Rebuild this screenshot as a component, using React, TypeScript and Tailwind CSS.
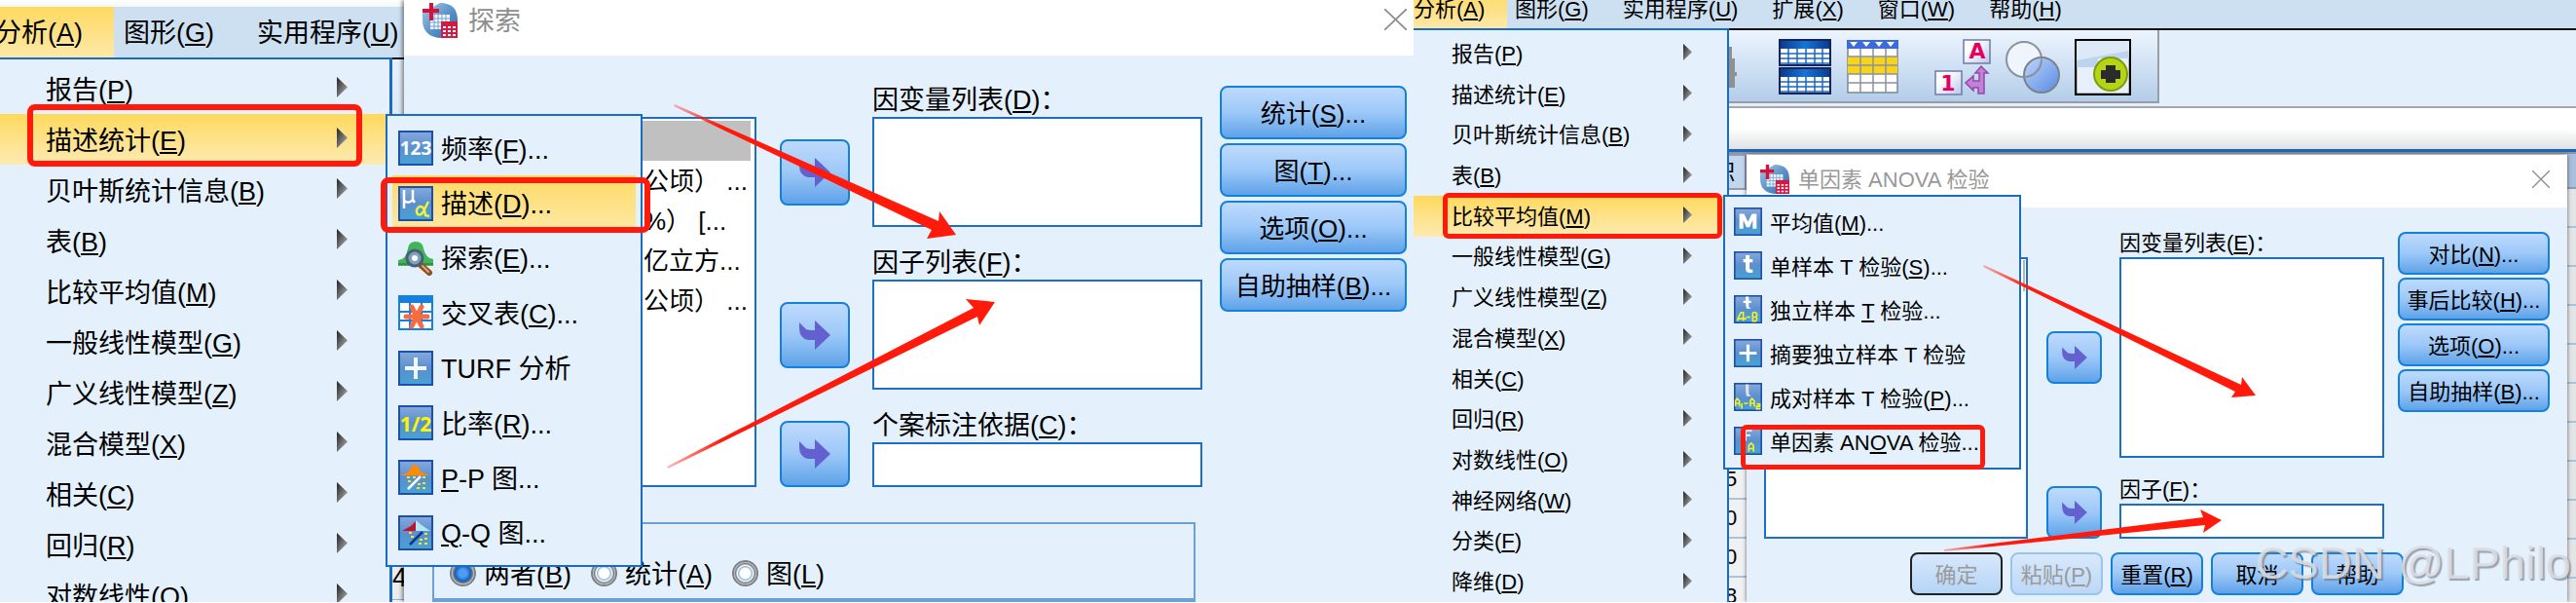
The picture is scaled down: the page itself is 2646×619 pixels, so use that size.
import type { ReactNode } from "react";

type Item = { label: string; hot?: string; tail?: string; active?: boolean };

const leftMenu: Item[] = [
  { label: "报告", hot: "P" },
  { label: "描述统计", hot: "E", active: true },
  { label: "贝叶斯统计信息", hot: "B" },
  { label: "表", hot: "B" },
  { label: "比较平均值", hot: "M" },
  { label: "一般线性模型", hot: "G" },
  { label: "广义线性模型", hot: "Z" },
  { label: "混合模型", hot: "X" },
  { label: "相关", hot: "C" },
  { label: "回归", hot: "R" },
  { label: "对数线性", hot: "O" },
];

const rightMenu: Item[] = [
  { label: "报告", hot: "P" },
  { label: "描述统计", hot: "E" },
  { label: "贝叶斯统计信息", hot: "B" },
  { label: "表", hot: "B" },
  { label: "比较平均值", hot: "M", active: true },
  { label: "一般线性模型", hot: "G" },
  { label: "广义线性模型", hot: "Z" },
  { label: "混合模型", hot: "X" },
  { label: "相关", hot: "C" },
  { label: "回归", hot: "R" },
  { label: "对数线性", hot: "O" },
  { label: "神经网络", hot: "W" },
  { label: "分类", hot: "F" },
  { label: "降维", hot: "D" },
];

const variables = ["", "公顷） ...", "%） [...", "亿立方...", "公顷） ..."];

const U = ({ children }: { children: ReactNode }) => (
  <u className="underline decoration-2 underline-offset-2">{children}</u>
);

const Label = ({ label, hot, tail = "" }: Item) => (
  <span className="whitespace-pre">
    {label}
    {hot && (
      <>
        (<U>{hot}</U>)
      </>
    )}
    {tail}
  </span>
);

/* ---------- icons ---------- */

const Defs = () => (
  <svg className="absolute h-0 w-0" aria-hidden="true">
    <defs>
      <linearGradient id="tile" x1="0" y1="0" x2="0" y2="1">
        <stop offset="0" stopColor="#86a9dc" />
        <stop offset="0.5" stopColor="#5b8fcd" />
        <stop offset="1" stopColor="#46a3d4" />
      </linearGradient>
      <linearGradient id="caret" x1="0" y1="0" x2="1" y2="1">
        <stop offset="0" stopColor="#222" />
        <stop offset="1" stopColor="#bbb" />
      </linearGradient>
      <linearGradient id="globe" x1="0" y1="0" x2="1" y2="1">
        <stop offset="0" stopColor="#a9cbe6" />
        <stop offset="0.5" stopColor="#5d94c8" />
        <stop offset="1" stopColor="#2b6cb0" />
      </linearGradient>
      <linearGradient id="head" x1="0" y1="0" x2="1" y2="0">
        <stop offset="0" stopColor="#0b3b8c" />
        <stop offset="0.5" stopColor="#1674d8" />
        <stop offset="1" stopColor="#0b3b8c" />
      </linearGradient>
      <linearGradient id="venn" x1="0" y1="0" x2="1" y2="1">
        <stop offset="0" stopColor="#bcd2f8" />
        <stop offset="1" stopColor="#4c84e4" />
      </linearGradient>
      <linearGradient id="sheet" x1="0" y1="0" x2="1" y2="1">
        <stop offset="0.3" stopColor="#fff" />
        <stop offset="1" stopColor="#b9c8ea" />
      </linearGradient>
    </defs>
  </svg>
);

const Caret = ({ className }: { className: string }) => (
  <svg viewBox="0 0 12 20" className={className} preserveAspectRatio="none">
    <path d="M0 0L12 10L0 20Z" fill="url(#caret)" />
  </svg>
);

const AppIcon = ({ className }: { className: string }) => (
  <svg viewBox="0 0 36 36" className={className}>
    <path d="M18 0C30 0 36 6 36 18V30L20 36C6 36 0 28 0 18V10Z" fill="url(#globe)" />
    <path d="M8 12H28V27H8Z" fill="#f4f9fd" />
    <path d="M8 16H28M8 20H28M8 24H28M12 12V27M16 12V27M20 12V27M24 12V27" stroke="#6fa3d0" strokeWidth="1" />
    <path d="M7 0H11V6H17V10H11V18H7V10H0V6H7Z" fill="#d8103c" />
    <path d="M19 19H36V36H19Z" fill="#d21a44" />
    <path d="M21 24H24V26H21ZM26 24H29V26H26ZM31 24H34V26H31ZM21 28H24V30H21ZM26 28H29V30H26ZM31 28H34V30H31ZM21 32H24V34H21ZM26 32H29V34H26ZM31 32H34V34H31Z" fill="#fff" />
  </svg>
);

const Tile = ({ children, small }: { children?: ReactNode; small?: boolean }) => (
  <svg viewBox="0 0 36 36" className={small ? "size-[29px] shrink-0" : "size-9 shrink-0"}>
    <rect x="1" y="1" width="34" height="34" fill="url(#tile)" stroke="#1c4fae" strokeWidth="2" />
    {children}
  </svg>
);

const Plus = () => <path d="M16 7H20V16H29V20H20V29H16V20H7V16H16Z" fill="#f1faff" />;

const FrequencyIcon = () => (
  <Tile>
    <text x="18" y="25" fill="#fff" fontSize="19" fontWeight="bold" textAnchor="middle" fontFamily="Open Sans">
      123
    </text>
  </Tile>
);

const DescriptiveIcon = () => (
  <Tile>
    <path d="M6 4V23M6 15Q11 19 15 14V4M15 14L17 17" fill="none" stroke="#fff" strokeWidth="2.5" />
    <path d="M31 16L27 24Q24 31 20 29Q17 24 22 21Q27 20 28 30L32 31" fill="none" stroke="#eef23c" strokeWidth="2.5" />
  </Tile>
);

const ExploreIcon = () => (
  <svg viewBox="0 0 36 36" className="size-9 shrink-0">
    <path d="M0 20Q8 20 10 8Q11 1 18 1Q25 1 26 8Q28 18 36 19V26H0Z" fill="#43b457" />
    <path d="M0 24H36" stroke="#2c9442" strokeWidth="2" />
    <path d="M23 25L32 33" stroke="#8e4f22" strokeWidth="6" strokeLinecap="round" />
    <path d="M25 26L31 32" stroke="#e0a878" strokeWidth="2" strokeLinecap="round" />
    <circle cx="17" cy="18" r="8" fill="#7fa2b8" stroke="#45617a" strokeWidth="3" />
    <circle cx="17" cy="18" r="3" fill="#fff" />
  </svg>
);

const CrosstabIcon = () => (
  <svg viewBox="0 0 36 36" className="size-9 shrink-0">
    <rect x="1" y="1" width="34" height="34" fill="#fff" stroke="#1480e4" strokeWidth="2" />
    <path d="M0 0H36V8H0Z" fill="#1480e4" />
    <path d="M1 17H35M1 26H35M12 8V36M24 8V36" stroke="#1480e4" strokeWidth="2" />
    <path d="M14 12L24 32M24 12L14 32M8 22H30" stroke="#fb6a3c" strokeWidth="5" strokeLinecap="round" />
  </svg>
);

const RatioIcon = () => (
  <Tile>
    <text x="18" y="27" fill="#fdf500" fontSize="21" fontWeight="bold" textAnchor="middle" fontFamily="Open Sans">
      1/2
    </text>
  </Tile>
);

const PPIcon = () => (
  <Tile>
    <path d="M2 16L10 13L14 7Q17 3 20 7L24 13L32 16Z" fill="#ff8c00" />
    <path d="M10 30L23 17" stroke="#fff" strokeWidth="2.5" />
    <path d="M9 18H12M10 22H13M15 18H18M19 29H22M20 25H23M25 24H28M25 29H28M25 18H28" stroke="#f5e52c" strokeWidth="2" />
  </Tile>
);

const QQIcon = () => (
  <Tile>
    <path d="M4 16L13 11L18 6V16Z" fill="#c8102c" />
    <path d="M18 16V5L24 10L33 16Z" fill="#a8ecfb" />
    <path d="M12 30L25 17" stroke="#14348c" strokeWidth="2.5" />
    <path d="M11 18H14M13 22H16M21 29H24M22 25H25M27 24H30M27 29H30M27 19H30" stroke="#f5e52c" strokeWidth="2" />
  </Tile>
);

const MeanIcon = () => (
  <Tile small>
    <path d="M7 27V8H13L18 18L23 8H29V27H24V16L20 25H16L12 16V27Z" fill="#fff" />
  </Tile>
);

const OneSampleIcon = () => (
  <Tile small>
    <path d="M15 5H20V10H24V14H20V22Q21 24 24 23V27Q15 29 15 22V14H12V10H15Z" fill="#fff" />
  </Tile>
);

const IndependentIcon = () => (
  <Tile small>
    <path d="M15 2H19V7H22V10H19V15L22 17H16L15 10H12V7H15Z" fill="#fff" />
    <path d="M5 33V30L9 22H12V33M5 30H16M16 28H21M24 22V33H28Q31 30 28 28H24M24 22H28Q31 25 28 28" fill="none" stroke="#f4f02c" strokeWidth="2" />
  </Tile>
);

const PairedIcon = () => (
  <Tile small>
    <path d="M15 2H19V14L22 17H16L15 10V5Z" fill="#dfe3e8" />
    <path d="M2 30V23L4 20L7 23V30M2 26H7M10 26V33M13 26H18M21 30V23L23 20L26 23V30M21 26H26M29 27H33V30H29V33H34" fill="none" stroke="#f4f02c" strokeWidth="2" />
  </Tile>
);

const AnovaIcon = () => (
  <Tile small>
    <path d="M16 5H23M16 11H21M15 4V18" stroke="#fff" strokeWidth="2" />
    <path d="M19 32V24L22 21L25 24V32M19 28H25" fill="none" stroke="#f4f02c" strokeWidth="2" />
  </Tile>
);

const SplitTablesIcon = () => (
  <svg viewBox="0 0 54 57" className="h-[57px] w-[54px]">
    {[0, 29].map((y) => (
      <g key={y} transform={`translate(0 ${y})`}>
        <rect x="1" y="1" width="52" height="26" fill="#fff" stroke="#16235c" strokeWidth="2" />
        <rect x="2" y="2" width="50" height="8" fill="url(#head)" />
        <path d="M2 15H52M2 20H52M2 25H52M10 10V26M19 10V26M28 10V26M37 10V26M45 10V26" stroke="#1668c8" strokeWidth="1.5" />
      </g>
    ))}
  </svg>
);

const SelectedRowsIcon = () => (
  <svg viewBox="0 0 53 55" className="h-[55px] w-[53px]">
    <rect x="1" y="1" width="51" height="53" fill="#fff" stroke="#7d8694" strokeWidth="1.5" />
    <rect x="0" y="0" width="53" height="9" fill="#3c6cdc" />
    <path d="M3 2H11L7 7ZM16 2H24L20 7ZM29 2H37L33 7ZM41 2H49L45 7Z" fill="#fff" />
    <rect x="1" y="17" width="51" height="18" fill="#f8d31c" />
    <path d="M1 17H52M1 26H52M1 35H52M1 44H52M14 9V54M27 9V54M40 9V54" stroke="#8a929e" strokeWidth="1.5" />
  </svg>
);

const ValueLabelsIcon = () => (
  <svg viewBox="0 0 58 58" className="h-[58px] w-[58px]">
    <rect x="30" y="1" width="27" height="24" fill="url(#sheet)" stroke="#6d7ba8" strokeWidth="1.5" />
    <rect x="1" y="33" width="27" height="24" fill="url(#sheet)" stroke="#6d7ba8" strokeWidth="1.5" />
    <text x="44" y="20" fill="#e6005c" fontSize="22" fontWeight="bold" textAnchor="middle" fontFamily="DejaVu Sans">
      A
    </text>
    <text x="14" y="53" fill="#e6005c" fontSize="22" fontWeight="bold" textAnchor="middle" fontFamily="DejaVu Sans">
      1
    </text>
    <path d="M45 56V50H40V53L32 45L40 38V43H46V35H42L48 28L55 35H51V56Z" fill="#c57fd6" stroke="#8f4aa8" strokeWidth="1.5" />
  </svg>
);

const VennIcon = () => (
  <svg viewBox="0 0 58 56" className="h-[56px] w-[58px]">
    <circle cx="20" cy="20" r="18" fill="#f0f4fc" stroke="#8a929e" strokeWidth="2" />
    <circle cx="38" cy="36" r="18" fill="url(#venn)" fillOpacity="0.9" stroke="#7a8290" strokeWidth="2" />
    <path d="M20 38A18 18 0 0 0 38 20" fill="none" stroke="#8a929e" strokeWidth="2" />
  </svg>
);

const AddBoxIcon = () => (
  <svg viewBox="0 0 58 58" className="size-[58px]">
    <rect x="1" y="1" width="56" height="56" fill="#e8f1fb" stroke="#000" strokeWidth="2.5" />
    <path d="M2 2H56V20H24V29H2Z" fill="#bdd4ee" />
    <path d="M2 2H56V12L2 22Z" fill="#dce9f7" />
    <circle cx="37" cy="36" r="17" fill="#b4d414" stroke="#7c9c14" strokeWidth="2" />
    <path d="M32 27H42V32H47V41H42V45H32V41H27V32H32Z" fill="#2b2b2b" />
  </svg>
);

/* ---------- controls ---------- */

const Close = ({ className }: { className: string }) => (
  <button aria-label="关闭" className={className}>
    <svg viewBox="0 0 20 20" className="size-full" preserveAspectRatio="none">
      <path d="M0 0L20 20M20 0L0 20" stroke="#8c8c8c" strokeWidth="1.5" />
    </svg>
  </button>
);

const glossy = "border-2 border-[#1480de] bg-linear-to-b from-[#bedafd] via-[#9cc8f8] to-[#5ea2e8]";

const MoveButton = ({ small }: { small?: boolean }) => (
  <button
    aria-label="移动变量"
    className={`flex shrink-0 items-center justify-center rounded-lg ${glossy} ${small ? "h-[54px] w-[57px]" : "h-[68px] w-[72px]"}`}
  >
    <svg viewBox="0 0 32 30" className={small ? "h-6 w-[26px]" : "h-[30px] w-8"}>
      <path d="M0 2L7 9Q9 10 16 10V0L32 15L16 30V20H9Q0 18 0 8Z" fill="#6460d0" />
    </svg>
  </button>
);

const fieldBox = "border-2 border-[#1c6fc4] bg-white outline-none resize-none";

const PopupRow = ({ icon, children, active }: { icon: ReactNode; children: ReactNode; active?: boolean }) => (
  <li
    className={`flex flex-1 items-center gap-2 pl-[6px] whitespace-pre ${active ? "bg-linear-to-b from-[#ffda62] to-[#fde8a4]" : ""}`}
  >
    {icon}
    <span className="pt-1">{children}</span>
  </li>
);

const Highlight = ({ className }: { className: string }) => (
  <div className={`pointer-events-none absolute border-[#ff1a0c] ${className}`} />
);

/* ---------- left half: descriptive statistics ---------- */

const ExploreDialog = () => (
  <section className="absolute top-0 right-0 bottom-0 left-[415px] flex flex-col bg-[#e4f0fc] shadow-[-2px_0_4px_rgba(0,0,0,0.45)]">
    <header className="flex h-[57px] shrink-0 items-start bg-white pt-[3px] pr-[7px] pl-[19px]">
      <AppIcon className="size-9" />
      <h2 className="ml-[11px] leading-[38px] text-[#8e8e8e]">探索</h2>
      <Close className="mt-[6px] ml-auto h-[22px] w-[23px]" />
    </header>

    <div className="flex pt-[31px] pr-[7px] pl-[29px]">
      <ul className={`mt-8 h-[380px] min-w-0 flex-1 overflow-hidden p-[2px] pr-1 text-[26px] leading-[41px] ${fieldBox}`}>
        {variables.map((name, i) => (
          <li key={i} className={`h-[41px] pt-px pl-[213px] whitespace-pre ${i === 0 ? "bg-[#c0c0c0]" : ""}`}>
            {name}
          </li>
        ))}
      </ul>

      <div className="ml-6 flex flex-col gap-[22px]">
        <div className="flex gap-[23px]">
          <div className="flex items-center pt-8">
            <MoveButton />
          </div>
          <label className="flex w-[339px] flex-col">
            <span className="h-8 leading-[30px]">
              <Label label="因变量列表" hot="D" tail="：" />
            </span>
            <textarea className={`h-[113px] ${fieldBox}`} />
          </label>
        </div>
        <div className="flex gap-[23px]">
          <div className="flex items-center pt-8">
            <MoveButton />
          </div>
          <label className="flex w-[339px] flex-col">
            <span className="h-8 leading-[30px]">
              <Label label="因子列表" hot="F" tail="：" />
            </span>
            <textarea className={`h-[113px] ${fieldBox}`} />
          </label>
        </div>
        <div className="flex items-end gap-[23px]">
          <MoveButton />
          <label className="flex w-[339px] flex-col">
            <span className="h-8 leading-[30px]">
              <Label label="个案标注依据" hot="C" tail="：" />
            </span>
            <input className={`h-[46px] ${fieldBox}`} />
          </label>
        </div>
      </div>

      <div className="ml-[18px] flex w-48 flex-col gap-1 text-[26px]">
        {[
          { label: "统计", hot: "S" },
          { label: "图", hot: "T" },
          { label: "选项", hot: "O" },
          { label: "自助抽样", hot: "B" },
        ].map((b) => (
          <button key={b.label} className={`h-[55px] rounded-lg pt-[3px] leading-none ${glossy}`}>
            <Label {...b} tail="..." />
          </button>
        ))}
      </div>
    </div>

    <fieldset className="mt-9 mr-56 ml-[29px] flex min-h-0 flex-1 items-center gap-5 border-2 border-b-4 border-[#6da1d6] pt-6 pl-[16px]">
      {[
        { label: "两者", hot: "B" },
        { label: "统计", hot: "A" },
        { label: "图", hot: "L" },
      ].map((r, i) => (
        <label key={r.label} className="flex items-center gap-2 leading-none">
          <input
            type="radio"
            name="show"
            defaultChecked={i === 0}
            className="size-[27px] appearance-none rounded-full border-2 border-[#7b8085] bg-[radial-gradient(circle,#fff_0_5px,#8fb8e0_7px,#fff_8px,#777c82_10px,#fff_12px)] checked:bg-[radial-gradient(circle,#4f9cf0_0_4px,#1560c0_8px,#777c82_10px,#fff_12px)]"
          />
          <span className="pt-1">
            <Label {...r} />
          </span>
        </label>
      ))}
    </fieldset>
  </section>
);

const DescriptivePopup = () => (
  <ul className="absolute top-[117px] left-[396px] flex h-[465px] w-[264px] flex-col border-2 border-[#1a6cc0] bg-[#e4f0fc] px-[5px] py-[5px]">
    <PopupRow icon={<FrequencyIcon />}>
      <Label label="频率" hot="F" tail="..." />
    </PopupRow>
    <PopupRow icon={<DescriptiveIcon />} active>
      <Label label="描述" hot="D" tail="..." />
    </PopupRow>
    <PopupRow icon={<ExploreIcon />}>
      <Label label="探索" hot="E" tail="..." />
    </PopupRow>
    <PopupRow icon={<CrosstabIcon />}>
      <Label label="交叉表" hot="C" tail="..." />
    </PopupRow>
    <PopupRow icon={<Tile><Plus /></Tile>}>TURF 分析</PopupRow>
    <PopupRow icon={<RatioIcon />}>
      <Label label="比率" hot="R" tail="..." />
    </PopupRow>
    <PopupRow icon={<PPIcon />}>
      <U>P</U>-P 图...
    </PopupRow>
    <PopupRow icon={<QQIcon />}>
      <U>Q</U>-Q 图...
    </PopupRow>
  </ul>
);

const DescriptivePanel = () => (
  <div className="relative flex flex-col overflow-hidden text-[27px] leading-none">
    <div className="h-[7px] shrink-0 bg-linear-to-b from-white to-[#f4f6f8]" />
    <nav className="flex h-[54px] shrink-0 items-stretch border-b-2 border-[#111] bg-[#cde0f2]">
      <span className="flex w-[117px] items-center bg-linear-to-b from-[#ffd95e] to-[#fde8a6] pt-[2px]">
        <span className="-ml-[5px]">
          <Label label="分析" hot="A" />
        </span>
      </span>
      <span className="flex items-center pt-[2px] pr-[34px] pl-[10px]">
        <Label label="图形" hot="G" />
      </span>
      <span className="flex items-center pt-[2px] pl-[10px]">
        <Label label="实用程序" hot="U" />
      </span>
    </nav>

    <div className="flex min-h-0 flex-1">
      <ul className="-mt-[2px] w-[403px] shrink-0 overflow-hidden border-t-2 border-r-[3px] border-[#1a6cc0] bg-[#e4f0fc] pt-1">
        {leftMenu.map((m) => (
          <li
            key={m.label}
            className={`flex h-[52px] items-center justify-between pt-1 pr-[43px] pl-[47px] ${m.active ? "bg-linear-to-b from-[#ffd95a] to-[#fdeab0]" : ""}`}
          >
            <Label {...m} />
            <Caret className="mb-2 h-[21px] w-[11px]" />
          </li>
        ))}
      </ul>
      <div className="flex w-3 flex-col justify-end bg-linear-to-b from-[#e6f0fa] via-[#b9cde4] to-[#f2f2f2]">
        <div className="h-9 overflow-hidden border-b border-[#8fb2d4] bg-[#ececec]">4</div>
        <div className="h-[2px]" />
      </div>
    </div>

    <ExploreDialog />
    <DescriptivePopup />

    <Highlight className="top-[107px] left-[28px] h-[64px] w-[344px] rounded-lg border-[6px]" />
    <Highlight className="top-[182px] left-[391px] h-[57px] w-[277px] rounded-lg border-[6px]" />
    <svg viewBox="0 0 360 400" className="pointer-events-none absolute top-[100px] left-[680px] h-[400px] w-[360px]">
      <defs>
        <linearGradient id="fadeA" gradientUnits="userSpaceOnUse" x1="13" y1="8" x2="60" y2="30">
          <stop offset="0" stopColor="#ff1a0c" stopOpacity="0.3" />
          <stop offset="1" stopColor="#ff1a0c" />
        </linearGradient>
        <linearGradient id="fadeB" gradientUnits="userSpaceOnUse" x1="5" y1="380" x2="60" y2="352">
          <stop offset="0" stopColor="#ff1a0c" stopOpacity="0.3" />
          <stop offset="1" stopColor="#ff1a0c" />
        </linearGradient>
      </defs>
      <path d="M13 7L284 127L285 117L302 141L272 145L277 136L12 9Z" fill="url(#fadeA)" />
      <path d="M5 379L320 216L312 207L342 210L326 234L324 225L6 381Z" fill="url(#fadeB)" />
    </svg>
  </div>
);

/* ---------- right half: one-way ANOVA ---------- */

const AnovaDialog = () => (
  <section className="absolute top-[159px] right-[9px] bottom-0 left-[342px] flex flex-col bg-[#e4f0fc] shadow-[0_0_4px_rgba(0,0,0,0.6)]">
    <header className="flex h-[54px] shrink-0 items-start bg-white pt-[10px] pr-[18px] pl-[14px]">
      <AppIcon className="size-[30px]" />
      <h2 className="ml-[9px] leading-8 text-[#989898]">单因素 ANOVA 检验</h2>
      <Close className="mt-[6px] ml-auto size-[18px]" />
    </header>

    <div className="flex px-[18px] pt-[25px]">
      <div className={`mt-[26px] flex h-[289px] min-w-0 flex-1 justify-end ${fieldBox}`}>
        <div className="m-px h-8 w-1 border-r-2 border-[#b4b4b4]" />
      </div>

      <div className="ml-[19px] flex flex-col gap-[21px]">
        <div className="flex gap-[18px]">
          <div className="flex items-center pt-[26px]">
            <MoveButton small />
          </div>
          <label className="flex w-[272px] flex-col">
            <span className="h-[26px] leading-6">
              <Label label="因变量列表" hot="E" tail="：" />
            </span>
            <textarea className={`h-[206px] ${fieldBox}`} />
          </label>
        </div>
        <div className="flex items-end gap-[18px]">
          <MoveButton small />
          <label className="flex w-[272px] flex-col">
            <span className="h-[26px] leading-6">
              <Label label="因子" hot="F" tail="：" />
            </span>
            <input className={`h-9 ${fieldBox}`} />
          </label>
        </div>
      </div>

      <div className="ml-[14px] flex w-[156px] flex-col gap-[3px]">
        {[
          { label: "对比", hot: "N" },
          { label: "事后比较", hot: "H" },
          { label: "选项", hot: "O" },
          { label: "自助抽样", hot: "B" },
        ].map((b) => (
          <button key={b.label} className={`h-11 rounded-lg pt-[3px] leading-none ${glossy}`}>
            <Label {...b} tail="..." />
          </button>
        ))}
      </div>
    </div>

    <footer className="mt-[14px] flex justify-center gap-2">
      <button disabled className="h-11 w-[95px] rounded-lg border-2 border-[#222] bg-linear-to-b from-[#d8e8fc] to-[#b4d4f6] pt-[3px] leading-none text-[#9a9a9a]">
        确定
      </button>
      <button disabled className="h-11 w-[95px] rounded-lg border-2 border-[#98c4ee] bg-linear-to-b from-[#d8e8fc] to-[#bcd8f6] pt-[3px] leading-none text-[#9a9a9a]">
        <Label label="粘贴" hot="P" />
      </button>
      <button className={`h-11 w-[95px] rounded-lg pt-[3px] leading-none ${glossy}`}>
        <Label label="重置" hot="R" />
      </button>
      <button className={`h-11 w-[95px] rounded-lg pt-[3px] leading-none ${glossy}`}>取消</button>
      <button className={`h-11 w-[95px] rounded-lg pt-[3px] leading-none ${glossy}`}>帮助</button>
    </footer>
  </section>
);

const MeansPopup = () => (
  <ul className="absolute top-[200px] left-[318px] flex h-[282px] w-[306px] flex-col border-2 border-[#1a6cc0] bg-[#e4f0fc] px-[3px] pt-[3px] pb-[5px]">
    <PopupRow icon={<MeanIcon />}>
      <Label label="平均值" hot="M" tail="..." />
    </PopupRow>
    <PopupRow icon={<OneSampleIcon />}>
      <Label label="单样本 T 检验" hot="S" tail="..." />
    </PopupRow>
    <PopupRow icon={<IndependentIcon />}>
      独立样本 <U>T</U> 检验...
    </PopupRow>
    <PopupRow icon={<Tile small><Plus /></Tile>}>摘要独立样本 T 检验</PopupRow>
    <PopupRow icon={<PairedIcon />}>
      <Label label="成对样本 T 检验" hot="P" tail="..." />
    </PopupRow>
    <PopupRow icon={<AnovaIcon />}>
      单因素 AN<U>O</U>VA 检验...
    </PopupRow>
  </ul>
);

const AnovaPanel = () => (
  <div className="relative flex flex-col overflow-hidden text-[22px] leading-none">
    <nav className="-mt-[11px] flex h-[42px] shrink-0 items-stretch border-b-2 border-[#111] bg-[#cde0f2]">
      <span className="flex w-24 items-center bg-linear-to-b from-[#ffd95e] to-[#fde8a6] pt-[2px]">
        <Label label="分析" hot="A" />
      </span>
      {[
        { label: "图形", hot: "G" },
        { label: "实用程序", hot: "U" },
        { label: "扩展", hot: "X" },
        { label: "窗口", hot: "W" },
        { label: "帮助", hot: "H" },
      ].map((m) => (
        <span key={m.label} className="flex items-center pt-[2px] pr-[27px] pl-2">
          <Label {...m} />
        </span>
      ))}
    </nav>

    <div className="flex min-h-0 flex-1">
      <ul className="-mt-[2px] flex w-[324px] shrink-0 flex-col border-t-2 border-r-2 border-[#1a6cc0] bg-[#e4f0fc] pt-[3px]">
        {rightMenu.map((m) => (
          <li
            key={m.label}
            className={`flex flex-1 items-center justify-between pt-[2px] pr-9 pl-[39px] ${m.active ? "bg-linear-to-b from-[#ffd95a] to-[#fdeab0]" : ""}`}
          >
            <Label {...m} />
            <Caret className="mb-1 h-[17px] w-[9px]" />
          </li>
        ))}
      </ul>

      <div className="flex min-w-0 flex-1 flex-col">
        <div className="flex h-20 shrink-0 items-start border-b-2 border-[#a4a8ac] bg-[#e3effb]">
          <div className="flex h-[75px] w-[442px] items-center border-r-2 border-b-2 border-[#9a9ea2] bg-linear-to-b from-[#edf5fe] to-[#b3cde9] pt-[2px]">
            <svg viewBox="0 0 8 42" className="h-[42px] w-2">
              <path d="M0 0H3V12H6V26H8V30H6V42H0Z" fill="#8e9092" />
            </svg>
            <div className="ml-[43px]">
              <SplitTablesIcon />
            </div>
            <div className="ml-4">
              <SelectedRowsIcon />
            </div>
            <div className="ml-[37px]">
              <ValueLabelsIcon />
            </div>
            <div className="ml-[14px]">
              <VennIcon />
            </div>
            <div className="ml-[14px]">
              <AddBoxIcon />
            </div>
          </div>
        </div>
        <div className="h-[45px] shrink-0 border-b-[3px] border-[#1c66b8] bg-linear-to-b from-white from-50% to-[#dfe1e4]" />

        {/* data grid showing on both sides of the dialog */}
        <div className="flex min-h-0 flex-1 justify-between border-t-2 border-[#8a96a8] bg-[#f0f1f2]">
          <div className="flex w-[18px] flex-col overflow-hidden">
            <div className="flex h-[37px] shrink-0 items-center border-2 border-l-0 border-[#8f9db4] bg-[#c2d6ee]">
              <span className="-ml-4">职</span>
            </div>
            <div className="h-[278px] shrink-0" />
            {["5", "0", "0", "8"].map((n, i) => (
              <div key={i} className="flex h-10 shrink-0 items-center border-b-2 border-[#a9c3da]">
                <span className="-ml-1">{n}</span>
              </div>
            ))}
          </div>
          <div className="w-[9px] overflow-hidden">
            <div className="h-9 border-b-2 border-[#8f9db4] bg-[#a9bfdc]" />
            {Array.from({ length: 11 }, (_, i) => (
              <div key={i} className="h-10 border-b-2 border-[#a9c3da] bg-[#e4e5e6]" />
            ))}
          </div>
        </div>
      </div>
    </div>

    <AnovaDialog />
    <MeansPopup />

    <Highlight className="top-[198px] left-[30px] h-[47px] w-[287px] rounded-md border-[5px]" />
    <Highlight className="top-[436px] left-[336px] h-[46px] w-[251px] rounded-md border-[5px]" />
    <svg viewBox="0 0 340 310" className="pointer-events-none absolute top-[260px] left-[540px] h-[310px] w-[340px]">
      <defs>
        <linearGradient id="fadeC" gradientUnits="userSpaceOnUse" x1="46" y1="13" x2="90" y2="34">
          <stop offset="0" stopColor="#ff1a0c" stopOpacity="0.3" />
          <stop offset="1" stopColor="#ff1a0c" />
        </linearGradient>
        <linearGradient id="fadeD" gradientUnits="userSpaceOnUse" x1="5" y1="305" x2="50" y2="299">
          <stop offset="0" stopColor="#ff1a0c" stopOpacity="0.3" />
          <stop offset="1" stopColor="#ff1a0c" />
        </linearGradient>
      </defs>
      <path d="M46 12L310 135L311 127L325 146L300 148L304 142L45 14Z" fill="url(#fadeC)" />
      <path d="M5 304L271 271L268 263L290 274L271 287L273 279L5 306Z" fill="url(#fadeD)" />
    </svg>
    <p className="pointer-events-none absolute right-[5px] bottom-[17px] text-[47px] leading-none whitespace-pre text-[#dcdfe4]/90 [text-shadow:2px_2px_1px_rgba(110,120,135,0.65)]">
      CSDN @LPhilo
    </p>
  </div>
);

export default function App() {
  return (
    <main className="grid h-screen grid-cols-[1452fr_1194fr] overflow-hidden bg-white pb-px font-['Liberation_Sans','Noto_Sans_CJK_SC',sans-serif] text-black">
      <Defs />
      <DescriptivePanel />
      <AnovaPanel />
    </main>
  );
}
